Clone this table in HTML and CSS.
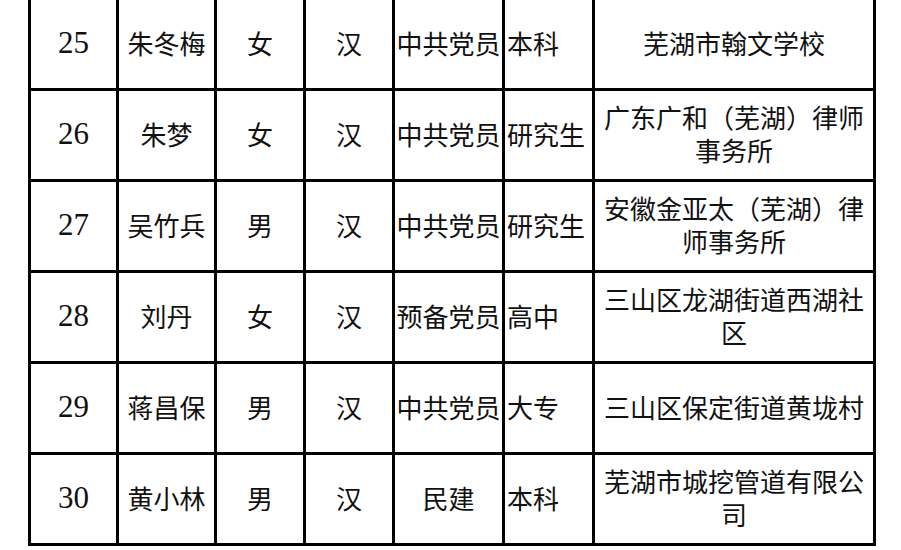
FILE: index.html
```html
<!DOCTYPE html>
<html lang="zh-CN">
<head>
<meta charset="utf-8">
<title>名单</title>
<link rel="stylesheet" href="styles.css">
</head>
<body>
<div class="sheet">
  <div class="grid">
    <div class="c num">25</div><div class="c">朱冬梅</div><div class="c">女</div><div class="c">汉</div><div class="c">中共党员</div><div class="c left">本科</div><div class="c wide">芜湖市翰文学校</div>
    <div class="c num">26</div><div class="c">朱梦</div><div class="c">女</div><div class="c">汉</div><div class="c">中共党员</div><div class="c left">研究生</div><div class="c wide">广东广和（芜湖）律师事务所</div>
    <div class="c num">27</div><div class="c">吴竹兵</div><div class="c">男</div><div class="c">汉</div><div class="c">中共党员</div><div class="c left">研究生</div><div class="c wide">安徽金亚太（芜湖）律师事务所</div>
    <div class="c num">28</div><div class="c">刘丹</div><div class="c">女</div><div class="c">汉</div><div class="c">预备党员</div><div class="c left">高中</div><div class="c wide">三山区龙湖街道西湖社区</div>
    <div class="c num">29</div><div class="c">蒋昌保</div><div class="c">男</div><div class="c">汉</div><div class="c">中共党员</div><div class="c left">大专</div><div class="c wide">三山区保定街道黄垅村</div>
    <div class="c num">30</div><div class="c">黄小林</div><div class="c">男</div><div class="c">汉</div><div class="c">民建</div><div class="c left">本科</div><div class="c wide">芜湖市城挖管道有限公司</div>
  </div>
</div>
</body>
</html>
```
FILE: styles.css
```css
html, body {
  margin: 0;
  padding: 0;
  background: #fff;
}
body {
  width: 901px;
  height: 550px;
  overflow: hidden;
  font-family: "Noto Sans CJK SC", "Noto Sans", sans-serif;
  color: #111;
}
.sheet {
  padding-left: 28px;
  margin-top: -3px;
}
.grid {
  display: grid;
  grid-template-columns: 88px 98px 89px 89px 110px 90px 281px;
  grid-auto-rows: 91px;
  width: max-content;
  border-left: 3px solid #000;
  border-top: 3px solid #000;
}
.c {
  box-sizing: border-box;
  border-right: 3px solid #000;
  border-bottom: 3px solid #000;
  display: flex;
  align-items: center;
  justify-content: center;
  text-align: center;
  font-size: 26px;
  line-height: 33px;
  white-space: nowrap;
  padding-bottom: 4px;
}
.num {
  font-family: "Liberation Serif", "Times New Roman", serif;
  font-size: 31px;
}
.left {
  justify-content: flex-start;
  text-align: left;
  padding-left: 2px;
}
.wide {
  white-space: normal;
  padding-left: 4px;
  padding-right: 4px;
  word-break: break-all;
}
```
